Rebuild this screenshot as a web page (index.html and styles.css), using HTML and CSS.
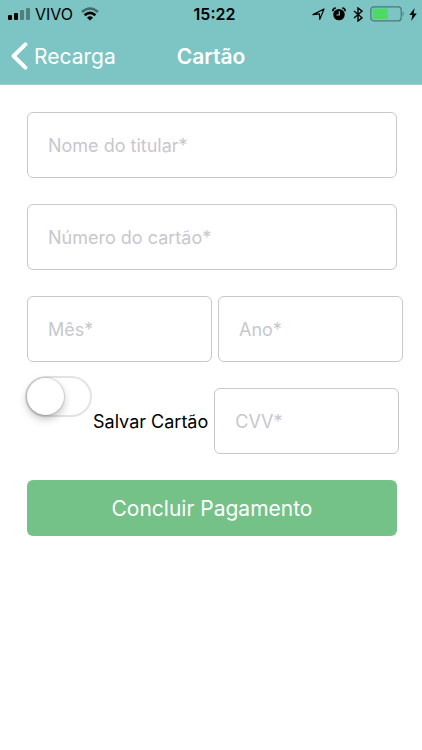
FILE: index.html
```
<!DOCTYPE html>
<html lang="pt-BR">
<head>
    <meta charset="UTF-8">
    <meta name="viewport" content="width=device-width, initial-scale=1.0">
    <title>Cartão</title>
    <link rel="stylesheet" href="styles.css">
</head>
<body>

    <header>
        <div class="status-bar">
            <div class="status-left">
                <svg class="signal" width="23" height="12" viewBox="0 0 23 12">
                    <rect x="0" y="7" width="4" height="5" rx="1"/>
                    <rect x="6" y="5" width="4" height="7" rx="1"/>
                    <rect x="12" y="2" width="4" height="10" rx="1" opacity=".35"/>
                    <rect x="18" y="0" width="4" height="12" rx="1" opacity=".35"/>
                </svg>
                <span>VIVO</span>
                <svg class="wifi" width="18" height="14" viewBox="0 0 18 14" fill="none" stroke="#000" stroke-width="2.6">
                    <path d="M1 5Q9-2 17 5" opacity=".45"/>
                    <path d="M3.6 8.2Q9 3.4 14.4 8.2"/>
                    <path d="M6 10.7Q9 7.8 12 10.7L9 13.6Z" fill="#000" stroke="none"/>
                </svg>
            </div>
            <span class="time">15:22</span>
            <div class="status-right">
                <svg width="13" height="13" viewBox="0 0 13 13" fill="none" stroke="#000" stroke-width="1.2" stroke-linejoin="round">
                    <path d="M12 1L7.8 11.4 7.4 5.8 1 6.6Z"/>
                </svg>
                <svg width="14" height="14" viewBox="0 0 14 14">
                    <circle cx="7" cy="7.6" r="5.7"/>
                    <path d="M.8 4.2Q.8 1.2 3.8 1M10.2 1Q13.2 1.2 13.2 4.2" fill="none" stroke="#000" stroke-width="1.6"/>
                    <path d="M7.3 4.2V8H4.4" fill="none" stroke="#7dc4c4" stroke-width="1.2"/>
                </svg>
                <svg width="10" height="15" viewBox="0 0 10 15" fill="none" stroke="#000" stroke-width="1.4">
                    <path d="M1 4L9 10.8 5 14V1L9 4.2 1 11"/>
                </svg>
                <svg class="battery" width="35" height="16" viewBox="0 0 35 16">
                    <rect x=".8" y=".8" width="30.4" height="14" rx="3" fill="none" stroke="#4b7878" stroke-width="1.2"/>
                    <rect x="2.6" y="2.6" width="15" height="10.4" rx="1" fill="#4cd964"/>
                    <path d="M32.6 5.4Q35 7.8 32.6 10.2Z" fill="#4b7878"/>
                </svg>
                <svg width="8" height="13" viewBox="0 0 8 13">
                    <path d="M5.6 0L.4 7H3.4L2.2 13 7.8 5.4H4.6Z"/>
                </svg>
            </div>
        </div>
        <nav class="nav-bar">
            <a class="back" href="#">
                <svg width="17" height="28" viewBox="0 0 17 28" fill="none" stroke="#fff" stroke-width="4" stroke-linecap="round" stroke-linejoin="round">
                    <path d="M14.4 2.4L2.6 14 14.4 25.6"/>
                </svg>
                Recarga
            </a>
            <h1>Cartão</h1>
        </nav>
    </header>

    <form class="card-form">
        <input class="field" type="text" placeholder="Nome do titular*" aria-label="Nome do titular">
        <input class="field" type="text" placeholder="Número do cartão*" aria-label="Número do cartão">
        <div class="row">
            <input class="field half" type="text" placeholder="Mês*" aria-label="Mês">
            <input class="field half" type="text" placeholder="Ano*" aria-label="Ano">
        </div>
        <div class="row save-row">
            <input class="switch" type="checkbox" id="save-card">
            <label for="save-card">Salvar Cartão</label>
            <input class="field half" type="text" placeholder="CVV*" aria-label="CVV">
        </div>
        <button class="submit" type="button">Concluir Pagamento</button>
    </form>

</body>
</html>
```
FILE: styles.css
```
* {
    box-sizing: border-box;
}
body {
    margin: 0;
    background-color: #fff;
    color: #000;
    font-family: Inter, "Liberation Sans", sans-serif;
}
svg {
    display: block;
    flex: none;
}
header {
    background-color: #7dc4c4;
    border-bottom: 1px solid #a9c9c9;
}
.status-bar {
    display: grid;
    grid-template-columns: 1fr auto 1fr;
    align-items: center;
    height: 28px;
    padding: 0 5px 0 8px;
    font-size: 16px;
}
.status-left,
.status-right {
    display: flex;
    align-items: center;
}
.status-left {
    gap: 4px;
}
.wifi {
    margin-left: 4px;
}
.status-right {
    justify-content: flex-end;
    gap: 7px;
}
.battery {
    margin-right: -3px;
}
.time {
    padding-left: 4px;
    font-weight: 600;
}
.nav-bar {
    display: grid;
    grid-template-columns: 1fr auto 1fr;
    align-items: center;
    height: 56px;
    padding: 0 11px;
    color: #fff;
    font-size: 21px;
}
.back {
    display: flex;
    align-items: center;
    gap: 6px;
    color: #fff;
    text-decoration: none;
}
h1 {
    margin: 0;
    font-size: 21px;
    font-weight: 600;
}
.card-form {
    display: flex;
    flex-direction: column;
    gap: 26px;
    padding: 27px 25px 27px 27px;
}
.field {
    width: 100%;
    height: 66px;
    padding: 0 20px;
    border: 1px solid #c8c8ca;
    border-radius: 6px;
    background-color: #fff;
    color: #000;
    font-family: inherit;
    font-size: 18px;
}
.field::placeholder {
    color: #c7c7cd;
    opacity: 1;
}
.row {
    display: flex;
    gap: 6px;
}
.half {
    flex: none;
    width: 50%;
}
/* the switch sits higher than the rest of its row */
.save-row {
    align-items: center;
}
.save-row label {
    flex: none;
    font-size: 18px;
}
.switch {
    appearance: none;
    flex: none;
    align-self: flex-start;
    width: 67px;
    height: 41px;
    margin: -12px -5px 0 -2px;
    border: 2px solid #e3e3e3;
    border-radius: 21px;
    background-color: #fff;
}
.switch::before {
    content: "";
    display: block;
    width: 37px;
    height: 37px;
    border-radius: 50%;
    background-color: #fff;
    box-shadow: 0 0 1px 1px rgba(0, 0, 0, 0.12), 0 4px 8px rgba(0, 0, 0, 0.25);
}
.switch:checked {
    border-color: #74c287;
    background-color: #74c287;
}
.switch:checked::before {
    margin-left: auto;
}
.submit {
    height: 56px;
    border: none;
    border-radius: 6px;
    background-color: #74c287;
    color: #fff;
    font-family: inherit;
    font-size: 21px;
    cursor: pointer;
}
```
